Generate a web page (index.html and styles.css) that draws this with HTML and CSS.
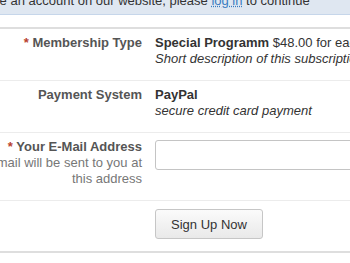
FILE: index.html
```html
<!DOCTYPE html>
<html>
<head>
<meta charset="utf-8">
<link rel="stylesheet" href="styles.css">
</head>
<body>
<div class="page">
  <div class="notice">If you already have an account on our website, please <a href="#" class="link">log in</a> to continue</div>
  <form class="form">
    <div class="row">
      <div class="title"><span class="req">*</span> Membership Type</div>
      <div class="element">
        <div><b class="strong">Special Programm</b> $48.00 for each month</div>
        <div class="desc">Short description of this subscription</div>
      </div>
    </div>
    <div class="row">
      <div class="title">Payment System</div>
      <div class="element">
        <div><b class="strong">PayPal</b></div>
        <div class="desc">secure credit card payment</div>
      </div>
    </div>
    <div class="row">
      <div class="title">
        <div><span class="req">*</span> Your E-Mail Address</div>
        <div class="comment">A confirmation email will be sent to you at this address</div>
      </div>
      <div class="element">
        <input class="input" type="text">
      </div>
    </div>
    <div class="row row-buttons">
      <div class="title"></div>
      <div class="element">
        <button type="button" class="btn">Sign Up Now</button>
      </div>
    </div>
  </form>
</div>
</body>
</html>
```
FILE: styles.css
```css
html, body {
  margin: 0;
  padding: 0;
  background: #fff;
  overflow: hidden;
}
body {
  font-family: "Liberation Sans", Arial, sans-serif;
  font-size: 13px;
  line-height: 16px;
  color: #333;
}
.page {
  margin-left: -108px;
  width: 520px;
}
.notice {
  margin-top: -12px;
  padding: 5px 10px 5px 5px;
  background: #dfe7f1;
  border-bottom: 1px solid #c6d6ea;
  color: #333;
  white-space: nowrap;
}
.link {
  color: #3a7cc0;
  text-decoration: underline dotted;
}
.form {
  margin: 12px 0 0;
  border-top: 2px solid #dedede;
  border-bottom: 2px solid #dedede;
}
.row {
  display: grid;
  grid-template-columns: 250px 1fr;
  column-gap: 13px;
  padding: 6px 0 13px;
  border-top: 1px solid #ececec;
}
.row:first-child {
  border-top: none;
}
.title {
  text-align: right;
  font-weight: bold;
  color: #555;
}
.req {
  color: #b8412f;
}
.comment {
  font-weight: normal;
  color: #777;
}
.element {
  white-space: nowrap;
}
.strong {
  color: #333;
}
.desc {
  font-style: italic;
}
.input {
  box-sizing: border-box;
  display: block;
  margin-top: 1px;
  width: 260px;
  height: 30px;
  border: 1px solid #c4c4c4;
  border-radius: 3px;
  background: #fff;
  padding: 4px 6px;
  font: inherit;
}
.row-buttons {
  padding: 8px 0 12px;
}
.btn {
  box-sizing: border-box;
  width: 108px;
  height: 30px;
  border: 1px solid #c6c6c6;
  border-radius: 3px;
  background: linear-gradient(#fbfbfb, #e9e9e9);
  color: #333;
  font-family: "Liberation Sans", Arial, sans-serif;
  font-size: 13px;
  padding: 0;
}
```
